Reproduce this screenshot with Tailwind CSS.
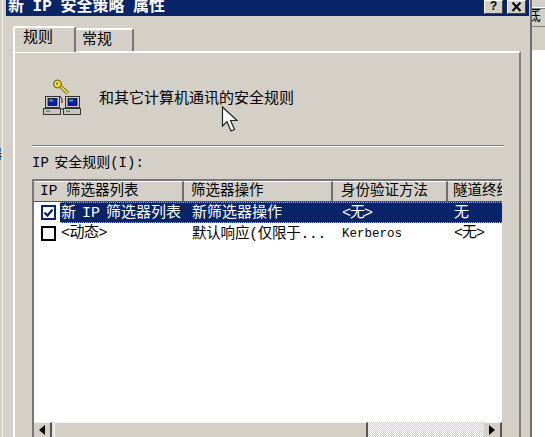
<!DOCTYPE html>
<html lang="zh">
<head>
<meta charset="utf-8">
<script src="https://cdn.jsdelivr.net/npm/@tailwindcss/browser@4"></script>
</head>
<body class="bg-white">
<div class="relative flex h-[437px] w-[545px] overflow-hidden bg-white font-['Liberation_Mono','Noto_Sans_CJK_SC',monospace] text-[15px] leading-[16px] text-black">
  <!-- left neighbour strip -->
  <div class="h-full w-[2px] shrink-0 overflow-hidden bg-[#d4d0c8] pt-[147px]">
    <div class="-ml-[11px] whitespace-nowrap text-[13px]">器</div>
  </div>
  <div class="h-full w-[1px] shrink-0 bg-[#f4f3f0]"></div>

  <!-- dialog -->
  <div class="flex h-full w-[529px] shrink-0 flex-col border-r-[2px] border-[#6e6e6e] bg-[#d4d0c8] pl-[3px] pr-[1px]">
    <!-- title bar -->
    <div class="flex h-[16px] shrink-0 items-start justify-between bg-[#0a246a] pl-[2px] pr-[3px]">
      <span class="-mt-[1px] whitespace-pre text-[16px] font-bold text-white [word-spacing:-1px]">新 IP 安全策略 属性</span>
      <div class="flex gap-[4px]">
        <div class="flex h-[14px] w-[19px] items-center justify-center border-r border-b border-r-[#404040] border-b-[#404040] border-t border-l border-t-white border-l-white bg-[#d4d0c8] text-[12px] font-bold leading-none text-black">?</div>
        <div class="flex h-[14px] w-[19px] items-center justify-center border-r border-b border-r-[#404040] border-b-[#404040] border-t border-l border-t-white border-l-white bg-[#d4d0c8]">
          <svg width="11" height="10" viewBox="0 0 11 10"><path d="M1.5 0.5 L9.5 9 M9.5 0.5 L1.5 9" stroke="#000" stroke-width="2" fill="none"/></svg>
        </div>
      </div>
    </div>

    <!-- tabs + page -->
    <div class="flex min-h-0 flex-1 flex-col pl-[7px] pr-[8px] pt-[10px]">
      <div class="flex h-[25px] shrink-0 items-end">
        <div class="relative z-10 -mb-[1px] flex h-[26px] w-[63px] items-start rounded-t-[2px] border-l-[2px] border-t-[2px] border-r-[2px] border-l-white border-t-white border-r-[#777] bg-[#d4d0c8] pl-[8px] pt-[3px]">规则</div>
        <div class="flex h-[23px] w-[58px] items-start rounded-t-[2px] border-t-[2px] border-r-[2px] border-t-white border-r-[#777] pl-[6px] pt-[3px]">常规</div>
      </div>
      <div class="flex min-h-0 flex-1 flex-col border-l-[2px] border-t-[2px] border-r-[2px] border-l-white border-t-white border-r-[#808080] pl-[17px] pr-[15px]">
        <!-- heading -->
        <div class="flex h-[92px] shrink-0 items-start pl-[10px] pt-[25px]">
          <svg class="-mt-[1px] shrink-0" width="40" height="40" viewBox="0 0 40 40">
            <path d="M18 19 L20 22 L20 26 M10 32 L30 32" stroke="#222" stroke-width="1" fill="none"/>
            <path d="M17 8 L26 16.5" stroke="#6b5a10" stroke-width="3.6" fill="none"/>
            <path d="M17 8 L26 16.5" stroke="#e8d83a" stroke-width="2" fill="none"/>
            <circle cx="15.5" cy="7" r="4" fill="#e8d83a" stroke="#6b5a10" stroke-width="1"/>
            <circle cx="15" cy="6.5" r="1" fill="#6b5a10"/>
            <rect x="3.5" y="19.5" width="14" height="11" fill="#d4d0c8" stroke="#333"/>
            <rect x="6" y="21.5" width="9" height="7" fill="#0a1ac8" stroke="#111" stroke-width="0.8"/>
            <rect x="7" y="22.5" width="4" height="2" fill="#30a0d0"/>
            <rect x="1.5" y="31.5" width="17" height="6" fill="#c8c6c0" stroke="#333"/>
            <rect x="4" y="33.5" width="4" height="1.5" fill="#18b838"/>
            <rect x="23.5" y="19.5" width="14" height="11" fill="#d4d0c8" stroke="#333"/>
            <rect x="26" y="21.5" width="9" height="7" fill="#0a1ac8" stroke="#111" stroke-width="0.8"/>
            <rect x="27" y="22.5" width="4" height="2" fill="#30a0d0"/>
            <rect x="21.5" y="31.5" width="17" height="6" fill="#c8c6c0" stroke="#333"/>
            <rect x="24" y="33.5" width="4" height="1.5" fill="#18b838"/>
          </svg>
          <span class="ml-[17px] mt-[14px] whitespace-nowrap">和其它计算机通讯的安全规则</span>
        </div>
        <!-- separator -->
        <div class="h-[2px] w-[472px] shrink-0 border-t border-b border-t-[#808080] border-b-white"></div>
        <!-- label -->
        <div class="flex h-[32px] shrink-0 items-end whitespace-pre pb-[8px] text-[14px] [word-spacing:-3px]">IP 安全规则(I):</div>
        <!-- list view -->
        <div class="flex min-h-0 w-[470px] flex-1 flex-col border-t-[2px] border-l-[2px] border-t-[#777] border-l-[#777] bg-white">
          <div class="grid h-[21px] shrink-0 grid-cols-[150px_149px_115px_54px] overflow-hidden border-b border-[#555] bg-[#d4d0c8] text-[14.5px]">
            <div class="overflow-hidden whitespace-pre border-r-[2px] border-[#6f6f6f] pl-[6px] pt-[1px] border-t border-t-white">IP 筛选器列表</div>
            <div class="overflow-hidden whitespace-nowrap border-r-[2px] border-[#6f6f6f] pl-[7px] pt-[1px] border-t border-t-white">筛选器操作</div>
            <div class="overflow-hidden whitespace-nowrap border-r-[2px] border-[#6f6f6f] pl-[8px] pt-[1px] border-t border-t-white">身份验证方法</div>
            <div class="overflow-hidden whitespace-nowrap pl-[5px] pt-[1px] border-t border-t-white">隧道终结点</div>
          </div>
          <div class="relative flex h-[21px] shrink-0 items-center pl-[7px]">
            <div class="flex h-[15px] w-[15px] shrink-0 items-center justify-center border-[2px] border-[#0a246a] bg-white">
              <svg width="11" height="11" viewBox="0 0 11 11"><path d="M1.5 5.5 L4.5 8.5 L9.5 2.5" stroke="#0a246a" stroke-width="2.2" fill="none"/></svg>
            </div>
            <div class="ml-[4px] grid h-full flex-1 grid-cols-[131px_150px_112px_1fr] items-center border-y border-dotted border-[#c9b26a] bg-[#0a246a] pl-[1px] pt-[2px] text-white">
              <span class="whitespace-pre [word-spacing:-3px]">新 IP 筛选器列表</span>
              <span class="whitespace-nowrap">新筛选器操作</span>
              <span class="whitespace-nowrap tracking-[-1px]">&lt;无&gt;</span>
              <span class="whitespace-nowrap">无</span>
            </div>
          </div>
          <div class="flex h-[20px] shrink-0 items-center pl-[7px]">
            <div class="h-[15px] w-[15px] shrink-0 border-[2px] border-black bg-white"></div>
            <div class="ml-[4px] grid flex-1 grid-cols-[131px_150px_112px_1fr] items-center pl-[1px] pt-[1px]">
              <span class="whitespace-nowrap tracking-[-0.5px]">&lt;动态&gt;</span>
              <span class="whitespace-nowrap text-[14.5px] tracking-[-0.2px]">默认响应(仅限于...</span>
              <span class="whitespace-nowrap text-[12.5px]">Kerberos</span>
              <span class="whitespace-nowrap tracking-[-1px]">&lt;无&gt;</span>
            </div>
          </div>
          <div class="min-h-0 flex-1"></div>
          <!-- scrollbar -->
          <div class="flex h-[15px] shrink-0 bg-[repeating-conic-gradient(#d4d0c8_0_25%,#ffffff_0_50%)] bg-[length:2px_2px]">
            <div class="flex h-[15px] w-[18px] shrink-0 items-center justify-center border-t border-r-[2px] border-t-[#f4f3f0] border-r-[#555] bg-[#d4d0c8]">
              <svg width="6" height="10" viewBox="0 0 6 10"><path d="M6 0 L0 5 L6 10 Z" fill="#000"/></svg>
            </div>
            <div class="ml-[2px] h-[15px] w-[314px] shrink-0 border-t border-r-[2px] border-l border-t-[#f4f3f0] border-l-[#f4f3f0] border-r-[#555] bg-[#d4d0c8]"></div>
            <div class="flex-1"></div>
            <div class="flex h-[15px] w-[18px] shrink-0 items-center justify-center border-t border-r-[2px] border-t-[#f4f3f0] border-r-[#555] bg-[#d4d0c8]">
              <svg width="6" height="10" viewBox="0 0 6 10"><path d="M0 0 L6 5 L0 10 Z" fill="#000"/></svg>
            </div>
          </div>
        </div>
      </div>
    </div>
  </div>

  <!-- right neighbour strip -->
  <div class="flex h-full min-w-0 flex-1 flex-col">
    <div class="h-[50px] overflow-hidden bg-[#d4d0c8]">
      <div class="mt-[7px] h-[2px] border-b border-t border-b-[#808080] border-t-white"></div>
      <div class="h-[18px] overflow-hidden border-b border-[#808080]">
        <div class="-ml-[6px] whitespace-nowrap">底</div>
      </div>
    </div>
    <div class="flex-1 bg-white"></div>
  </div>

  <!-- mouse pointer over the page -->
  <svg class="absolute left-[221px] top-[106px]" width="18" height="28" viewBox="0 0 18 28">
    <path d="M1.5 1 L1.5 20 L6 15.5 L10 25 L13.5 23.5 L9.5 14.5 L16 14.5 Z" fill="#fff" stroke="#222" stroke-width="1.2"/>
  </svg>
</div>
</body>
</html>
